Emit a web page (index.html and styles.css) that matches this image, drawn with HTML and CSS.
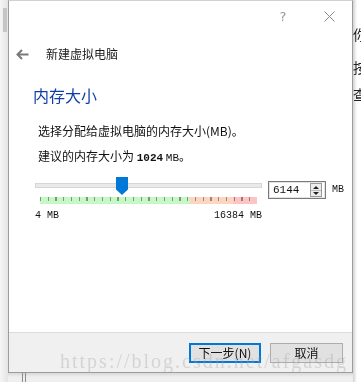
FILE: index.html
```html
<!DOCTYPE html>
<html lang="zh">
<head>
    <meta charset="UTF-8">
    <meta name="viewport" content="width=device-width, initial-scale=1">
    <title>新建虚拟电脑</title>
    <link rel="stylesheet" href="styles.css">
</head>
<body>
    <div class="screen">
        <div class="side-left">
            <div class="side-bar"></div>
        </div>

        <div class="dialog-col">
            <div class="dialog">
                <div class="main">
                    <div class="titlebar">
                        <span class="cap-btn help">?</span>
                        <span class="cap-btn">
                            <svg width="11" height="11" viewBox="0 0 11 11">
                                <path d="M0.5 0.5 L10.5 10.5 M10.5 0.5 L0.5 10.5" stroke="#8a8a8a" stroke-width="1" fill="none"/>
                            </svg>
                        </span>
                    </div>

                    <div class="header">
                        <svg class="back" width="13" height="11" viewBox="0 0 13 11">
                            <path d="M6 1 L1.5 5.5 L6 10 M1.5 5.5 L12.5 5.5" stroke="#7a7a7a" stroke-width="2" fill="none"/>
                        </svg>
                        <span class="header-title">新建虚拟电脑</span>
                    </div>

                    <h1 class="page-title">内存大小</h1>

                    <div class="content">
                        <p class="line">选择分配给虚拟电脑的内存大小(MB)。</p>
                        <p class="line second">建议的内存大小为 <b class="mono">1024</b> <span class="mono">MB</span>。</p>

                        <div class="slider-row">
                            <div class="slider">
                                <div class="track"></div>
                                <div class="thumb"></div>
                                <div class="ruler">
                                    <div class="zone green"></div>
                                    <div class="zone peach"></div>
                                    <div class="zone pink"></div>
                                </div>
                                <div class="scale">
                                    <span>4 MB</span>
                                    <span>16384 MB</span>
                                </div>
                            </div>

                            <div class="spinbox">
                                <span class="spin-value">6144</span>
                                <div class="spin-btns">
                                    <div class="spin-up"></div>
                                    <div class="spin-down"></div>
                                </div>
                            </div>
                            <span class="unit">MB</span>
                        </div>
                    </div>
                </div>

                <div class="footer">
                    <button class="btn primary">下一步(N)</button>
                    <button class="btn">取消</button>
                </div>
            </div>
            <div class="below">
                <div class="below-line"></div>
            </div>
        </div>

        <div class="side-right">
            <span class="peek one">你</span>
            <span class="peek two">按</span>
            <span class="peek three">查</span>
        </div>

        <div class="watermark">https://blog.csdn.net/afgasdg</div>
    </div>
</body>
</html>
```

FILE: styles.css
```css
body {
    margin: 0;
    background: #ffffff;
    font-family: "Noto Sans CJK SC", sans-serif;
    overflow: hidden;
}

.screen {
    position: relative;
    display: flex;
    width: 361px;
    height: 382px;
    overflow: hidden;
}

/* background bits around the dialog */
.side-left {
    width: 8px;
    flex: none;
    background: linear-gradient(to right, #f5f5f5, #e4e4e4);
    padding-top: 8px;
    box-sizing: border-box;
}
.side-bar {
    width: 4px;
    height: 24px;
    margin-left: 3px;
    background: #c6c6c6;
}

.side-right {
    width: 8px;
    flex: none;
    background: linear-gradient(to right, #d2d2d2, #ffffff 4px);
    overflow: hidden;
    display: flex;
    flex-direction: column;
    font-size: 14px;
    line-height: 14px;
    color: #222;
}
.peek {
    display: block;
    white-space: nowrap;
}
.peek.one { margin-top: 27px; }
.peek.two { margin-top: 19px; }
.peek.three { margin-top: 13px; }

.dialog-col {
    width: 345px;
    flex: none;
    display: flex;
    flex-direction: column;
}

.dialog {
    height: 373px;
    border: 1px solid #9c9c9c;
    border-top-color: #d0d0d0;
    box-sizing: border-box;
    display: flex;
    flex-direction: column;
    background: #ffffff;
}

.below {
    flex: 1;
    background: linear-gradient(to bottom, #d8d8d8, #efefef 4px);
}
.below-line {
    width: 2px;
    height: 100%;
    margin-left: 14px;
    border-left: 1px solid #8a8a8a;
    border-right: 1px solid #8a8a8a;
}

.main {
    flex: 1;
}

.titlebar {
    height: 30px;
    display: flex;
    justify-content: flex-end;
}
.cap-btn {
    width: 46px;
    height: 30px;
    display: flex;
    align-items: center;
    justify-content: center;
}
.help {
    font-family: "DejaVu Sans", sans-serif;
    font-size: 13px;
    color: #9a9a9a;
    padding-bottom: 1px;
}

.header {
    display: flex;
    align-items: center;
    height: 16px;
    margin-top: 15px;
    padding-left: 7px;
}
.back {
    flex: none;
}
.header-title {
    margin-left: 17px;
    font-size: 12px;
    line-height: 16px;
    color: #1a1a1a;
}

.page-title {
    margin: 23px 0 0 24px;
    font-size: 16px;
    line-height: 20px;
    font-weight: normal;
    color: #0f3fa6;
}

.content {
    padding-left: 26px;
}

.line {
    margin: 18px 0 0 3px;
    font-size: 12px;
    line-height: 16px;
    color: #111;
}
.line.second {
    margin-top: 9px;
}
.mono {
    font-family: "Liberation Mono", monospace;
    font-size: 11px;
}

.slider-row {
    display: flex;
    align-items: flex-start;
    margin-top: 11px;
}

.slider {
    position: relative;
    width: 227px;
}
.track {
    margin-top: 6px;
    height: 5px;
    background: #e8eaea;
    border: 1px solid #d6d6d6;
    box-sizing: border-box;
}
.thumb {
    position: absolute;
    left: 81px;
    top: 0;
    width: 12px;
    height: 18px;
    background: #0078d7;
    clip-path: polygon(0 0, 100% 0, 100% 70%, 50% 100%, 0 70%);
}
.ruler {
    display: flex;
    width: 217px;
    height: 7px;
    margin: 9px 0 0 5px;
    background-image: repeating-linear-gradient(to right, #a59b8e 0 1px, transparent 1px 7.75px);
    background-size: 100% 4px;
    background-repeat: no-repeat;
}
.zone {
    height: 7px;
    mix-blend-mode: multiply;
}
.green { width: 150px; background: #c6f7c6; }
.peach { width: 43px; background: #fdd6c2; }
.pink { width: 24px; background: #fcc4c4; }

.scale {
    display: flex;
    justify-content: space-between;
    margin-top: 6px;
    font-family: "Liberation Mono", monospace;
    font-size: 10px;
    line-height: 12px;
    color: #111;
}

.spinbox {
    display: flex;
    align-items: center;
    width: 58px;
    height: 18px;
    margin: 4px 0 0 6px;
    border: 1px solid #7a7a7a;
    box-shadow: inset 0 0 0 1px #e3e3e3;
    box-sizing: border-box;
}
.spin-value {
    flex: 1;
    padding-left: 4px;
    font-family: "Liberation Mono", monospace;
    font-size: 11px;
    line-height: 14px;
    color: #111;
}
.spin-btns {
    width: 12px;
    height: 14px;
    margin-right: 3px;
    border: 1px solid #9a9a9a;
    background: #ececec;
    box-sizing: border-box;
    display: flex;
    flex-direction: column;
}
.spin-up,
.spin-down {
    flex: 1;
    position: relative;
}
.spin-up {
    border-bottom: 1px solid #b8b8b8;
}
.spin-up::after,
.spin-down::after {
    content: "";
    position: absolute;
    left: 2px;
    border-left: 3px solid transparent;
    border-right: 3px solid transparent;
}
.spin-up::after {
    top: 2px;
    border-bottom: 3px solid #222;
}
.spin-down::after {
    top: 1px;
    border-top: 3px solid #222;
}

.unit {
    margin: 7px 0 0 6px;
    font-family: "Liberation Mono", monospace;
    font-size: 10px;
    line-height: 12px;
    color: #111;
}

.footer {
    height: 40px;
    background: #f0f0f0;
    border-top: 1px solid #dcdcdc;
    box-sizing: border-box;
    display: flex;
    justify-content: flex-end;
    gap: 9px;
    padding: 10px 9px 0 0;
}

.btn {
    width: 73px;
    height: 20px;
    padding: 0;
    background: #e1e1e1;
    border: 1px solid #adadad;
    font-family: "Noto Sans CJK SC", sans-serif;
    font-size: 12px;
    line-height: 16px;
    color: #111;
}
.btn.primary {
    width: 72px;
    border: 2px solid #0078d7;
}

.watermark {
    position: absolute;
    left: 60px;
    top: 350px;
    font-family: "Liberation Serif", serif;
    font-size: 20px;
    line-height: 22px;
    letter-spacing: 2px;
    color: rgba(160, 160, 160, 0.35);
    white-space: nowrap;
    pointer-events: none;
}
```
